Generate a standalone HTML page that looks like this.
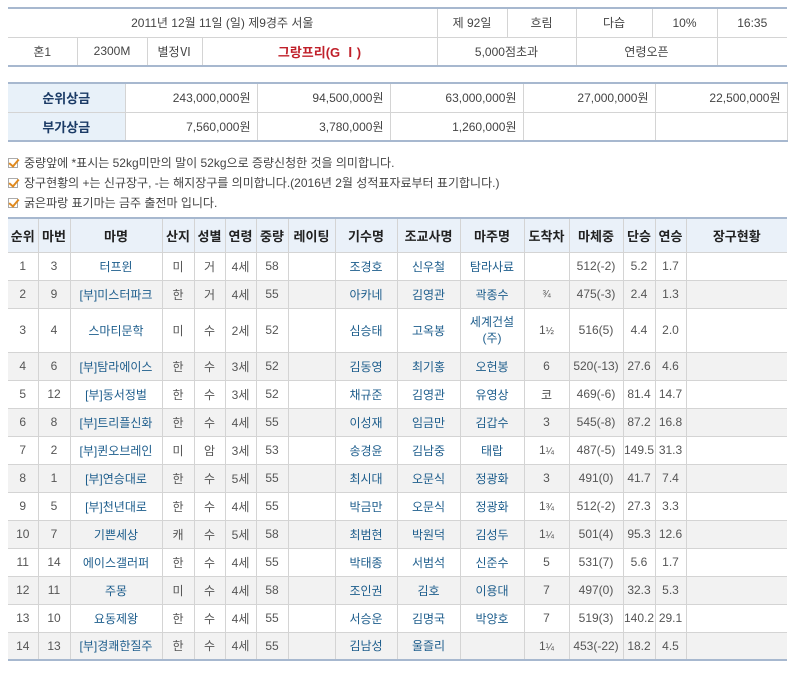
<!DOCTYPE html>
<html><head><meta charset="utf-8"><style>
*{margin:0;padding:0;box-sizing:border-box}
body{width:795px;height:675px;background:#fff;font-family:"Liberation Sans","Noto Sans CJK KR",sans-serif;font-size:12px;color:#444;position:relative;overflow:hidden}
table{border-collapse:collapse;table-layout:fixed;position:absolute;left:8px}
td,th{text-align:center;white-space:nowrap;overflow:hidden;padding:0}
#t1{top:7px;width:779px;border-top:2px solid #a7b8cf;border-bottom:2px solid #a7b8cf}
#t1 td{border-left:1px solid #d4d4d4;height:29px;color:#444}
#t1 tr:first-child td{border-bottom:1px solid #d4d4d4}
#t1 td:first-child{border-left:none}
#t2{top:82px;width:779px;border-top:2px solid #a7b8cf;border-bottom:2px solid #a7b8cf}
#t2 td{border:1px solid #d4d4d4;height:29px;text-align:right;padding-right:6px}
#t2 th{background:#e8f1f9;color:#1b3b66;font-weight:bold;font-size:13px;border:1px solid #d4d4d4;border-left:none}
.note{position:absolute;left:8px;font-size:12px;color:#444}
.cb{display:inline-block;width:10px;height:10px;border:1px solid #aaa;vertical-align:-1px;margin-right:6px;position:relative}
.cb:after{content:"";position:absolute;left:2px;top:-2px;width:4px;height:8px;border:solid #e08a1e;border-width:0 2px 2px 0;transform:rotate(40deg)}
#t3{top:217px;width:779px;border-top:2px solid #a7b8cf;border-bottom:2px solid #a7b8cf}
#t3 th{background:#eaf1f9;color:#222;font-size:13px;font-weight:bold;height:34px;border-left:1px solid #d4d4d4;border-bottom:1px solid #d4d4d4}
#t3 td{height:28px;border-left:1px solid #d4d4d4;border-bottom:1px solid #d4d4d4;color:#555}
#t3 th:first-child,#t3 td:first-child{border-left:none}
#t3 tr:nth-child(odd) td{background:#f2f2f2}
#t3 tr.tall td{height:44px}
#t3 td.b{color:#1d5d8c}
.f{font-size:10px}
</style></head><body>
<table id="t1">
<colgroup><col style="width:69px"><col style="width:70px"><col style="width:55px"><col style="width:235px"><col style="width:70px"><col style="width:69px"><col style="width:76px"><col style="width:65px"><col style="width:70px"></colgroup>
<tr><td colspan="4">2011년 12월 11일 (일) 제9경주 서울</td><td>제 92일</td><td>흐림</td><td>다습</td><td>10%</td><td>16:35</td></tr>
<tr><td>혼1</td><td>2300M</td><td>별정Ⅵ</td><td style="color:#c0202a;font-weight:bold;font-size:13px">그랑프리(G Ⅰ)</td><td colspan="2">5,000점초과</td><td colspan="2">연령오픈</td><td></td></tr>
</table>
<table id="t2">
<colgroup><col style="width:117px"><col style="width:132px"><col style="width:133px"><col style="width:133px"><col style="width:132px"><col style="width:132px"></colgroup>
<tr><th>순위상금</th><td>243,000,000원</td><td>94,500,000원</td><td>63,000,000원</td><td>27,000,000원</td><td>22,500,000원</td></tr>
<tr><th>부가상금</th><td>7,560,000원</td><td>3,780,000원</td><td>1,260,000원</td><td></td><td></td></tr>
</table>
<div class="note" style="top:154px"><span class="cb"></span>중량앞에 *표시는 52kg미만의 말이 52kg으로 증량신청한 것을 의미합니다.</div>
<div class="note" style="top:174px"><span class="cb"></span>장구현황의 +는 신규장구, -는 해지장구를 의미합니다.(2016년 2월 성적표자료부터 표기합니다.)</div>
<div class="note" style="top:194px"><span class="cb"></span>굵은파랑 표기마는 금주 출전마 입니다.</div>
<table id="t3">
<colgroup><col style="width:30px"><col style="width:32px"><col style="width:92px"><col style="width:32px"><col style="width:31px"><col style="width:31px"><col style="width:32px"><col style="width:47px"><col style="width:62px"><col style="width:63px"><col style="width:64px"><col style="width:45px"><col style="width:54px"><col style="width:32px"><col style="width:31px"><col style="width:101px"></colgroup>
<tr><th>순위</th><th>마번</th><th>마명</th><th>산지</th><th>성별</th><th>연령</th><th>중량</th><th>레이팅</th><th>기수명</th><th>조교사명</th><th>마주명</th><th>도착차</th><th>마체중</th><th>단승</th><th>연승</th><th>장구현황</th></tr>
<tr><td>1</td><td>3</td><td class="b">터프윈</td><td>미</td><td>거</td><td>4세</td><td>58</td><td></td><td class="b">조경호</td><td class="b">신우철</td><td class="b">탐라사료</td><td></td><td>512(-2)</td><td>5.2</td><td>1.7</td><td></td></tr>
<tr><td>2</td><td>9</td><td class="b">[부]미스터파크</td><td>한</td><td>거</td><td>4세</td><td>55</td><td></td><td class="b">아카네</td><td class="b">김영관</td><td class="b">곽종수</td><td class="f">¾</td><td>475(-3)</td><td>2.4</td><td>1.3</td><td></td></tr>
<tr class="tall"><td>3</td><td>4</td><td class="b">스마티문학</td><td>미</td><td>수</td><td>2세</td><td>52</td><td></td><td class="b">심승태</td><td class="b">고옥봉</td><td class="b" style="line-height:16px">세계건설<br>(주)</td><td>1<span class="f">½</span></td><td>516(5)</td><td>4.4</td><td>2.0</td><td></td></tr>
<tr><td>4</td><td>6</td><td class="b">[부]탐라에이스</td><td>한</td><td>수</td><td>3세</td><td>52</td><td></td><td class="b">김동영</td><td class="b">최기홍</td><td class="b">오헌봉</td><td>6</td><td>520(-13)</td><td>27.6</td><td>4.6</td><td></td></tr>
<tr><td>5</td><td>12</td><td class="b">[부]동서정벌</td><td>한</td><td>수</td><td>3세</td><td>52</td><td></td><td class="b">채규준</td><td class="b">김영관</td><td class="b">유영상</td><td>코</td><td>469(-6)</td><td>81.4</td><td>14.7</td><td></td></tr>
<tr><td>6</td><td>8</td><td class="b">[부]트리플신화</td><td>한</td><td>수</td><td>4세</td><td>55</td><td></td><td class="b">이성재</td><td class="b">임금만</td><td class="b">김갑수</td><td>3</td><td>545(-8)</td><td>87.2</td><td>16.8</td><td></td></tr>
<tr><td>7</td><td>2</td><td class="b">[부]퀸오브레인</td><td>미</td><td>암</td><td>3세</td><td>53</td><td></td><td class="b">송경윤</td><td class="b">김남중</td><td class="b">태랍</td><td>1<span class="f">¼</span></td><td>487(-5)</td><td>149.5</td><td>31.3</td><td></td></tr>
<tr><td>8</td><td>1</td><td class="b">[부]연승대로</td><td>한</td><td>수</td><td>5세</td><td>55</td><td></td><td class="b">최시대</td><td class="b">오문식</td><td class="b">정광화</td><td>3</td><td>491(0)</td><td>41.7</td><td>7.4</td><td></td></tr>
<tr><td>9</td><td>5</td><td class="b">[부]천년대로</td><td>한</td><td>수</td><td>4세</td><td>55</td><td></td><td class="b">박금만</td><td class="b">오문식</td><td class="b">정광화</td><td>1<span class="f">¾</span></td><td>512(-2)</td><td>27.3</td><td>3.3</td><td></td></tr>
<tr><td>10</td><td>7</td><td class="b">기쁜세상</td><td>캐</td><td>수</td><td>5세</td><td>58</td><td></td><td class="b">최범현</td><td class="b">박원덕</td><td class="b">김성두</td><td>1<span class="f">¼</span></td><td>501(4)</td><td>95.3</td><td>12.6</td><td></td></tr>
<tr><td>11</td><td>14</td><td class="b">에이스갤러퍼</td><td>한</td><td>수</td><td>4세</td><td>55</td><td></td><td class="b">박태종</td><td class="b">서범석</td><td class="b">신준수</td><td>5</td><td>531(7)</td><td>5.6</td><td>1.7</td><td></td></tr>
<tr><td>12</td><td>11</td><td class="b">주몽</td><td>미</td><td>수</td><td>4세</td><td>58</td><td></td><td class="b">조인권</td><td class="b">김호</td><td class="b">이용대</td><td>7</td><td>497(0)</td><td>32.3</td><td>5.3</td><td></td></tr>
<tr><td>13</td><td>10</td><td class="b">요동제왕</td><td>한</td><td>수</td><td>4세</td><td>55</td><td></td><td class="b">서승운</td><td class="b">김명국</td><td class="b">박양호</td><td>7</td><td>519(3)</td><td>140.2</td><td>29.1</td><td></td></tr>
<tr><td>14</td><td>13</td><td class="b">[부]경쾌한질주</td><td>한</td><td>수</td><td>4세</td><td>55</td><td></td><td class="b">김남성</td><td class="b">울즐리</td><td></td><td>1<span class="f">¼</span></td><td>453(-22)</td><td>18.2</td><td>4.5</td><td></td></tr>
</table>
</body></html>
